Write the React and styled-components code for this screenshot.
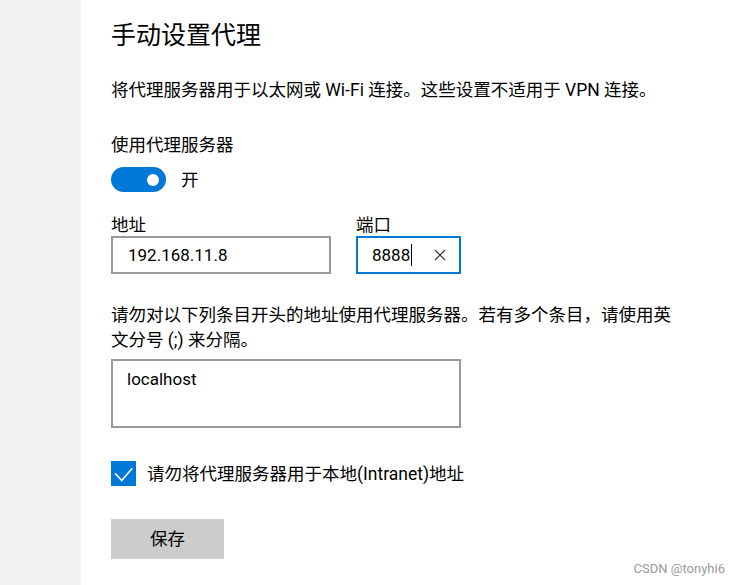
import React from "react";
import styled, { createGlobalStyle } from "styled-components";

const GlobalStyle = createGlobalStyle`
  html, body {
    margin: 0;
    padding: 0;
    background: #ffffff;
  }
  body {
    font-family: "Segoe UI", Roboto, "Noto Sans CJK SC", sans-serif;
    color: #000000;
  }
`;

const Page = styled.div`
  display: flex;
  width: 741px;
  height: 585px;
  position: relative;
  overflow: hidden;
`;

const Sidebar = styled.div`
  width: 81px;
  flex: none;
  background: #f2f2f2;
`;

const Main = styled.div`
  flex: 1;
  display: flex;
  flex-direction: column;
  align-items: flex-start;
  padding: 18px 0 0 30px;
  font-size: 17.5px;
  line-height: 24px;
`;

const Title = styled.h1`
  margin: 0;
  font-size: 25px;
  line-height: 36px;
  font-weight: 400;
`;

const Text = styled.p`
  margin: ${(p) => p.$mt || 0}px 0 0;
  line-height: ${(p) => p.$lh || 24}px;
  white-space: nowrap;
`;

const ToggleRow = styled.div`
  display: flex;
  align-items: center;
  gap: 15px;
  margin-top: 10px;
  height: 25px;
`;

const Toggle = styled.div`
  width: 55px;
  height: 25px;
  border-radius: 13px;
  background: #0078d7;
  display: flex;
  align-items: center;
  justify-content: flex-end;
  padding-right: 7px;
  box-sizing: border-box;
`;

const Knob = styled.span`
  width: 12px;
  height: 12px;
  border-radius: 50%;
  background: #ffffff;
`;

const FieldRow = styled.div`
  display: flex;
  gap: 25px;
  margin-top: 23px;
`;

const Field = styled.div`
  display: flex;
  flex-direction: column;
`;

const Label = styled.span`
  line-height: 20px;
  margin-bottom: 1px;
`;

const Input = styled.div`
  width: ${(p) => p.$w}px;
  height: 38px;
  box-sizing: border-box;
  border: 2px solid ${(p) => (p.$focused ? "#0078d7" : "#999999")};
  display: flex;
  align-items: center;
  padding: 0 ${(p) => p.$pr || 0}px 0 ${(p) => p.$pl || 15}px;
  font-size: 17px;
`;

const Value = styled.span`
  flex: 1;
  display: flex;
  align-items: center;
`;

const Caret = styled.span`
  width: 1px;
  height: 22px;
  background: #000;
  margin-left: 1px;
`;

const Clear = styled.svg`
  width: 12px;
  height: 12px;
  flex: none;
`;

const Area = styled.div`
  width: 350px;
  height: 69px;
  box-sizing: border-box;
  border: 2px solid #999999;
  margin-top: 6px;
  padding: 6px 0 0 14px;
  font-size: 17px;
`;

const CheckRow = styled.label`
  display: flex;
  align-items: center;
  gap: 11px;
  margin-top: 33px;
`;

const CheckBox = styled.span`
  width: 25px;
  height: 25px;
  background: #0078d7;
  display: flex;
`;

const Button = styled.button`
  margin-top: 33px;
  width: 113px;
  height: 40px;
  border: none;
  background: #cccccc;
  font: inherit;
  font-size: 17.5px;
  color: #000;
  padding: 0;
`;

const Watermark = styled.span`
  position: absolute;
  right: 16px;
  bottom: 9px;
  font-family: Roboto, "Noto Sans", sans-serif;
  font-size: 13px;
  color: #9a9a9a;
`;

export default function App() {
  return (
    <Page>
      <GlobalStyle />
      <Sidebar />
      <Main>
        <Title>手动设置代理</Title>
        <Text $mt={24}>
          将代理服务器用于以太网或 Wi-Fi 连接。这些设置不适用于 VPN 连接。
        </Text>
        <Text $mt={31}>使用代理服务器</Text>
        <ToggleRow>
          <Toggle>
            <Knob />
          </Toggle>
          <span>开</span>
        </ToggleRow>
        <FieldRow>
          <Field>
            <Label>地址</Label>
            <Input $w={220}>
              <Value>192.168.11.8</Value>
            </Input>
          </Field>
          <Field>
            <Label>端口</Label>
            <Input $w={105} $focused $pl={14} $pr={13}>
              <Value>
                8888
                <Caret />
              </Value>
              <Clear viewBox="0 0 12 12">
                <path d="M1 1 L11 11 M11 1 L1 11" stroke="#333" strokeWidth="1.1" fill="none" />
              </Clear>
            </Input>
          </Field>
        </FieldRow>
        <Text $mt={29} $lh={25}>
          请勿对以下列条目开头的地址使用代理服务器。若有多个条目，请使用英
          <br />
          文分号 (;) 来分隔。
        </Text>
        <Area>localhost</Area>
        <CheckRow>
          <CheckBox>
            <svg width="25" height="25" viewBox="0 0 25 25">
              <path d="M4 12.3 L10.7 19.5 L21.3 7.3" stroke="#fff" strokeWidth="1.6" fill="none" />
            </svg>
          </CheckBox>
          <span>请勿将代理服务器用于本地(Intranet)地址</span>
        </CheckRow>
        <Button>保存</Button>
      </Main>
      <Watermark>CSDN @tonyhi6</Watermark>
    </Page>
  );
}
